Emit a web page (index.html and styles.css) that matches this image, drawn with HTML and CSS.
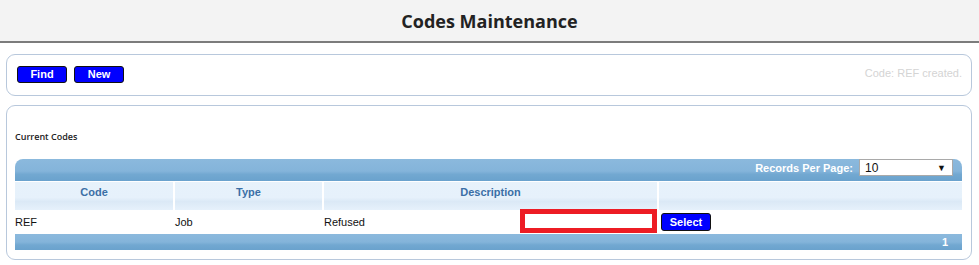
FILE: index.html
```html
<!DOCTYPE html>
<html>
<head>
<meta charset="utf-8">
<title>Codes Maintenance</title>
<link rel="stylesheet" href="styles.css">
</head>
<body>
<header class="page-header"><h1>Codes Maintenance</h1></header>
<section class="panel toolbar">
  <div class="buttons">
    <button class="btn btn-find">Find</button>
    <button class="btn btn-new">New</button>
  </div>
  <div class="status">Code: REF created.</div>
</section>
<section class="panel codes">
  <h2>Current Codes</h2>
  <div class="grid">
    <div class="grid-top">
      <span class="rpp-label">Records Per Page:</span>
      <div class="rpp-select"><span>10</span><span class="arrow">▼</span></div>
    </div>
    <table>
      <colgroup><col class="c1"><col class="c2"><col class="c3"><col class="c4"></colgroup>
      <thead>
        <tr><th>Code</th><th>Type</th><th>Description</th><th></th></tr>
      </thead>
      <tbody>
        <tr>
          <td>REF</td><td>Job</td>
          <td class="desc"><span>Refused</span><span class="red-input"></span></td>
          <td class="action"><button class="btn btn-select">Select</button></td>
        </tr>
      </tbody>
    </table>
    <div class="grid-foot"><span>1</span></div>
  </div>
</section>
</body>
</html>
```
FILE: styles.css
```css
* { box-sizing: border-box; }
body { margin: 0; font-family: "Liberation Sans", Arial, sans-serif; background: #fff; }
.page-header {
  height: 43px;
  background: #f3f3f3;
  border-bottom: 2px solid #7c7c7c;
  display: flex; align-items: center; justify-content: center;
}
.page-header h1 {
  margin: 0; font-family: "Open Sans", sans-serif; font-weight: 700;
  font-size: 18px; color: #222; letter-spacing: 0;
}
.panel {
  margin: 0 7px 0 6px;
  border: 1px solid #b8c8dc;
  border-radius: 9px;
}
.toolbar {
  margin-top: 11px;
  height: 42px;
  display: flex; align-items: flex-start; justify-content: space-between;
  padding: 11px 9px 0 10px;
}
.buttons { display: flex; gap: 7px; }
.btn {
  background: #0000ff; color: #fff; border: 1px solid #111; border-radius: 3px;
  font-family: "Liberation Sans", Arial, sans-serif; font-weight: 700; font-size: 11px;
  height: 17px; width: 50px; padding: 0; line-height: 15px; cursor: pointer;
}
.status { color: #d4d4d4; font-size: 11px; padding-top: 0; line-height: 14px; }
.codes { margin-top: 9px; height: 155px; padding: 0 9px 0 8px; }
.codes h2 {
  margin: 25px 0 16px; font-family: "Open Sans", sans-serif; font-weight: 600;
  font-size: 9px; color: #222; line-height: 12px;
}
.grid-top {
  height: 23px;
  border-radius: 8px 8px 0 0;
  background: linear-gradient(to bottom, #8bb9dd 0%, #84b4da 55%, #72a8d1 70%, #6aa2cd 100%);
  border-bottom: 1px solid #fff;
  display: flex; align-items: flex-start; justify-content: flex-end;
  padding-right: 9px;
}
.rpp-label { color: #fff; font-weight: 700; font-size: 11px; line-height: 18px; margin-right: 6px; }
.rpp-select {
  width: 94px; height: 17px; background: #fff; border: 1px solid #a9a9a9;
  display: flex; justify-content: space-between; align-items: center;
  padding: 0 6px 0 5px; font-size: 12px; color: #111;
}
.rpp-select .arrow { font-size: 9px; }
table { width: 947px; border-collapse: separate; border-spacing: 0; table-layout: fixed; }
col.c1 { width: 158px; } col.c2 { width: 149px; } col.c3 { width: 335px; } col.c4 { width: 305px; }
th {
  height: 28px; padding: 0 0 9px;
  background: linear-gradient(to bottom, #e7f2fb 0%, #e6f1fb 55%, #dbe9f6 70%, #e6f1fb 100%);
  color: #3b6fa6; font-size: 11px; font-weight: 700; text-align: center;
}
th + th, td + td { border-left: 2px solid #fff; }
td { height: 24px; padding: 0; font-size: 11px; color: #111; background: #fff; }
td.desc { position: relative; }
.desc .red-input {
  position: absolute; right: 0; top: -1px; width: 137px; height: 24px;
  border: 5px solid #ed1c24; background: #fff;
}
td.action { padding-left: 2px; }
.btn-select { width: 50px; height: 18px; }
.grid-foot {
  height: 16px;
  background: linear-gradient(to bottom, #8bb9dd 0%, #84b4da 50%, #72a8d1 68%, #6aa2cd 100%);
  display: flex; justify-content: flex-end; padding-right: 14px;
  color: #fff; font-weight: 700; font-size: 11px; line-height: 16px;
}
```
